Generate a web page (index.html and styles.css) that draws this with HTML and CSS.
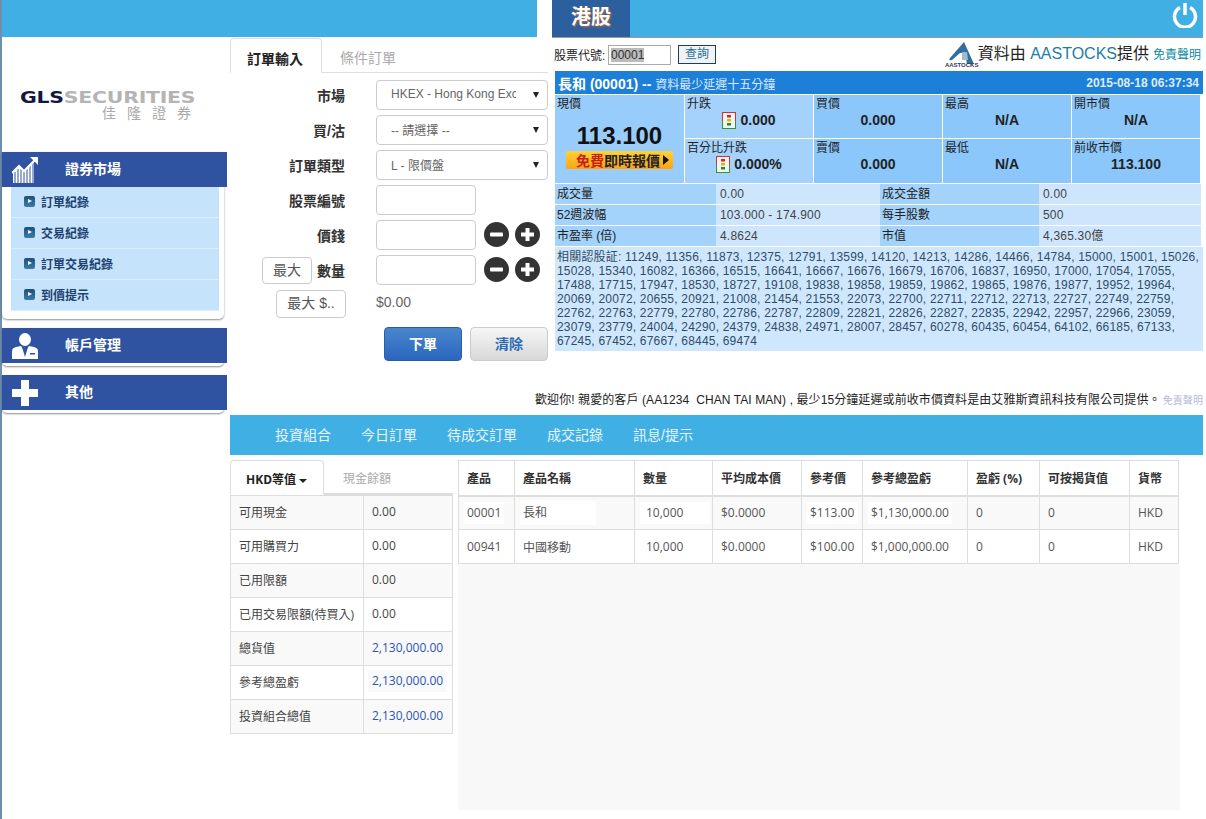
FILE: index.html
```html
<!DOCTYPE html>
<html lang="zh-Hant">
    <head>
        <meta charset="UTF-8">
        <title>GLS Securities</title>
        <link rel="stylesheet" href="styles.css">
    </head>
    <body>
        <div class="page">
            <div class="top">
                <div class="top-left">
                    <div class="top-bar"></div>
                    <div class="top-left-body">
                        <!-- 左側選單 -->
                        <div class="sidebar">
                            <div class="logo">
                                <div class="logo-en"><b>GLS</b>SECURITIES</div>
                                <div class="logo-zh">佳隆證券</div>
                            </div>
                            <div class="menu">
                                <div class="menu-head">
                                    <svg class="menu-icon" width="26" height="26" viewBox="0 0 26 26">
                                        <path d="M1 26V15L7 9l5 5 5-5 5-5V26z" fill="#fff"/>
                                        <path d="M3 26V15M6 26V12M9 26V12M12 26V15M15 26V12M18 26V9M21 26V6" stroke="#2f53a0" stroke-width="1"/>
                                        <path d="M0 16l7-7 5 5 11-11" fill="none" stroke="#fff" stroke-width="2"/>
                                        <path d="M18 0h8v8z" fill="#fff"/>
                                    </svg>
                                    <span>證券市場</span>
                                </div>
                                <ul class="menu-list">
                                    <li class="menu-item"><i class="bullet"></i>訂單紀錄</li>
                                    <li class="menu-item"><i class="bullet"></i>交易紀錄</li>
                                    <li class="menu-item"><i class="bullet"></i>訂單交易紀錄</li>
                                    <li class="menu-item"><i class="bullet"></i>到價提示</li>
                                </ul>
                            </div>
                            <div class="menu">
                                <div class="menu-head">
                                    <svg class="menu-icon" width="26" height="26" viewBox="0 0 26 26">
                                        <ellipse cx="13" cy="6.5" rx="6" ry="6.5" fill="#fff"/>
                                        <path d="M0 26V18q0-3 4-4l5-1 4 6 4-6 5 1q4 1 4 4v8z" fill="#fff"/>
                                        <path d="M10 14l3 10 3-10-3 3z" fill="#2f53a0"/>
                                        <rect x="18" y="20" width="5" height="1.5" fill="#2f53a0"/>
                                    </svg>
                                    <span>帳戶管理</span>
                                </div>
                            </div>
                            <div class="menu">
                                <div class="menu-head">
                                    <svg class="menu-icon" width="26" height="26" viewBox="0 0 26 26">
                                        <path d="M9 0h8v9h9v8h-9v9H9v-9H0V9h9z" fill="#fff"/>
                                    </svg>
                                    <span>其他</span>
                                </div>
                            </div>
                        </div>

                        <!-- 訂單輸入 -->
                        <div class="order">
                            <div class="order-tabs">
                                <a class="order-tab active">訂單輸入</a>
                                <a class="order-tab">條件訂單</a>
                            </div>
                            <div class="order-form">
                                <div class="form-row">
                                    <label class="form-label">市場</label>
                                    <div class="field select"><span class="select-text">HKEX - Hong Kong Exc</span><i class="caret"></i></div>
                                </div>
                                <div class="form-row">
                                    <label class="form-label">買/沽</label>
                                    <div class="field select"><span class="select-text">-- 請選擇 --</span><i class="caret"></i></div>
                                </div>
                                <div class="form-row">
                                    <label class="form-label">訂單類型</label>
                                    <div class="field select"><span class="select-text">L - 限價盤</span><i class="caret"></i></div>
                                </div>
                                <div class="form-row">
                                    <label class="form-label">股票編號</label>
                                    <div class="field short"></div>
                                </div>
                                <div class="form-row">
                                    <label class="form-label">價錢</label>
                                    <div class="field short"></div>
                                    <svg class="step" width="25" height="25" viewBox="0 0 25 25"><circle cx="12.5" cy="12.5" r="12.5" fill="#333"/><rect x="6" y="10.5" width="13" height="4" rx="1" fill="#fff"/></svg>
                                    <svg class="step" width="25" height="25" viewBox="0 0 25 25"><circle cx="12.5" cy="12.5" r="12.5" fill="#333"/><path d="M10.5 6h4v4.5H19v4h-4.5V19h-4v-4.5H6v-4h4.5z" fill="#fff"/></svg>
                                </div>
                                <div class="form-row">
                                    <label class="form-label"><a class="small-btn">最大</a>數量</label>
                                    <div class="field short"></div>
                                    <svg class="step" width="25" height="25" viewBox="0 0 25 25"><circle cx="12.5" cy="12.5" r="12.5" fill="#333"/><rect x="6" y="10.5" width="13" height="4" rx="1" fill="#fff"/></svg>
                                    <svg class="step" width="25" height="25" viewBox="0 0 25 25"><circle cx="12.5" cy="12.5" r="12.5" fill="#333"/><path d="M10.5 6h4v4.5H19v4h-4.5V19h-4v-4.5H6v-4h4.5z" fill="#fff"/></svg>
                                </div>
                                <div class="form-row amount-row">
                                    <div class="form-label"><a class="small-btn wide">最大 $..</a></div>
                                    <div class="amount">$0.00</div>
                                </div>
                                <div class="form-actions">
                                    <a class="btn btn-primary">下單</a>
                                    <a class="btn btn-default">清除</a>
                                </div>
                            </div>
                        </div>
                    </div>
                </div>

                <!-- 港股報價 -->
                <div class="quote">
                    <div class="quote-head">
                        <div class="quote-tab">港股</div>
                        <svg class="power" width="26" height="26" viewBox="0 0 26 26"><path d="M8 5.5a10.5 10.5 0 1 0 10 0" fill="none" stroke="#fff" stroke-width="3.5"/><path d="M13 1v12" stroke="#fff" stroke-width="3.5"/></svg>
                    </div>
                    <div class="quote-search">
                        <span class="search-label">股票代號:</span>
                        <span class="search-input"><span class="search-value">00001</span></span>
                        <a class="search-btn">查詢</a>
                        <div class="source">
                            <div class="aa-logo">
                                <svg width="30" height="22" viewBox="0 0 30 22"><path d="M17 0L3 16q-2 3 2 2l8-7h5l2 11h7z" fill="#2d6f9e"/><path d="M15 10h5l1 8h-6z" fill="#9fb9cc"/></svg>
                                <span class="aa-name">AASTOCKS</span>
                            </div>
                            <span class="source-text">資料由 <em>AASTOCKS</em>提供</span>
                            <a class="source-link">免責聲明</a>
                        </div>
                    </div>
                    <div class="quote-title">
                        <span><b>長和 (00001) --</b> <small>資料最少延遲十五分鐘</small></span>
                        <b class="quote-time">2015-08-18 06:37:34</b>
                    </div>
                    <div class="quote-grid">
                        <div class="q-cell q-main">
                            <div class="q-label">現價</div>
                            <div class="q-price">113.100</div>
                            <a class="free-btn"><span>免費</span>即時報價<i class="free-arrow"></i></a>
                        </div>
                        <div class="q-cell q-light">
                            <div class="q-label">升跌</div>
                            <div class="q-value q-change">
                                <svg class="light" width="14" height="17" viewBox="0 0 14 17"><rect x=".5" y=".5" width="13" height="16" fill="#f4f4f4" stroke="#c33"/><path d="M.5 9v7.5h13V9" fill="none" stroke="#2a9a3a"/><rect x="5" y="3" width="4" height="2.5" fill="#d22"/><rect x="5" y="7" width="4" height="2.5" fill="#e8b400"/><rect x="5" y="11" width="4" height="2.5" fill="#1a8f2e"/></svg>
                                0.000
                            </div>
                        </div>
                        <div class="q-cell"><div class="q-label">買價</div><div class="q-value">0.000</div></div>
                        <div class="q-cell"><div class="q-label">最高</div><div class="q-value">N/A</div></div>
                        <div class="q-cell"><div class="q-label">開市價</div><div class="q-value">N/A</div></div>
                        <div class="q-cell q-light">
                            <div class="q-label">百分比升跌</div>
                            <div class="q-value q-change">
                                <svg class="light" width="14" height="17" viewBox="0 0 14 17"><rect x=".5" y=".5" width="13" height="16" fill="#f4f4f4" stroke="#c33"/><path d="M.5 9v7.5h13V9" fill="none" stroke="#2a9a3a"/><rect x="5" y="3" width="4" height="2.5" fill="#d22"/><rect x="5" y="7" width="4" height="2.5" fill="#e8b400"/><rect x="5" y="11" width="4" height="2.5" fill="#1a8f2e"/></svg>
                                0.000%
                            </div>
                        </div>
                        <div class="q-cell"><div class="q-label">賣價</div><div class="q-value">0.000</div></div>
                        <div class="q-cell"><div class="q-label">最低</div><div class="q-value">N/A</div></div>
                        <div class="q-cell"><div class="q-label">前收市價</div><div class="q-value">113.100</div></div>
                    </div>
                    <div class="stats">
                        <div class="s-key">成交量</div><div class="s-val">0.00</div><div class="s-key">成交金額</div><div class="s-val">0.00</div>
                        <div class="s-key">52週波幅</div><div class="s-val">103.000 - 174.900</div><div class="s-key">每手股數</div><div class="s-val">500</div>
                        <div class="s-key">市盈率 (倍)</div><div class="s-val">4.8624</div><div class="s-key">市值</div><div class="s-val">4,365.30億</div>
                    </div>
                    <div class="warrants">相關認股証: 11249, 11356, 11873, 12375, 12791, 13599, 14120, 14213, 14286, 14466, 14784, 15000, 15001, 15026, 15028, 15340, 16082, 16366, 16515, 16641, 16667, 16676, 16679, 16706, 16837, 16950, 17000, 17054, 17055, 17488, 17715, 17947, 18530, 18727, 19108, 19838, 19858, 19859, 19862, 19865, 19876, 19877, 19952, 19964, 20069, 20072, 20655, 20921, 21008, 21454, 21553, 22073, 22700, 22711, 22712, 22713, 22727, 22749, 22759, 22762, 22763, 22779, 22780, 22786, 22787, 22809, 22821, 22826, 22827, 22835, 22942, 22957, 22966, 23059, 23079, 23779, 24004, 24290, 24379, 24838, 24971, 28007, 28457, 60278, 60435, 60454, 64102, 66185, 67133, 67245, 67452, 67667, 68445, 69474</div>
                    <div class="welcome"><span>歡迎你! 親愛的客戶 (AA1234&nbsp; CHAN TAI MAN) , 最少15分鐘延遲或前收市價資料是由艾雅斯資訊科技有限公司提供。</span><a class="welcome-link">免責聲明</a></div>
                </div>
            </div>

            <div class="lower">
                <div class="nav">
                    <a class="nav-item">投資組合</a>
                    <a class="nav-item">今日訂單</a>
                    <a class="nav-item">待成交訂單</a>
                    <a class="nav-item">成交記錄</a>
                    <a class="nav-item">訊息/提示</a>
                </div>
                <div class="lower-body">
                    <div class="cash">
                        <div class="cash-tabs">
                            <a class="cash-tab active">HKD等值<i class="cash-caret"></i></a>
                            <a class="cash-tab">現金餘額</a>
                        </div>
                        <table class="cash-table">
                            <tr><td>可用現金</td><td>0.00</td></tr>
                            <tr><td>可用購買力</td><td>0.00</td></tr>
                            <tr><td>已用限額</td><td>0.00</td></tr>
                            <tr><td>已用交易限額(待買入)</td><td>0.00</td></tr>
                            <tr><td>總貨值</td><td class="num-blue">2,130,000.00</td></tr>
                            <tr><td>參考總盈虧</td><td class="num-blue"><span class="cash-patch">2,130,000.00</span></td></tr>
                            <tr><td>投資組合總值</td><td class="num-blue">2,130,000.00</td></tr>
                        </table>
                    </div>
                    <div class="holdings">
                        <table class="hold-table">
                            <colgroup>
                                <col class="c1"><col class="c2"><col class="c3"><col class="c4"><col class="c5"><col class="c6"><col class="c7"><col class="c8"><col class="c9">
                            </colgroup>
                            <tr>
                                <th>產品</th><th>產品名稱</th><th>數量</th><th>平均成本價</th><th>參考價</th><th>參考總盈虧</th><th>盈虧 (%)</th><th>可按揭貨值</th><th>貨幣</th>
                            </tr>
                            <tr class="odd">
                                <td><span class="patch">00001</span></td><td><span class="patch name-patch">長和</span></td><td class="qty"><span class="patch qty-patch">10,000</span></td><td>$0.0000</td><td><span class="patch">$113.00</span></td><td><span class="patch">$1,130,000.00</span></td><td>0</td><td>0</td><td>HKD</td>
                            </tr>
                            <tr>
                                <td>00941</td><td>中國移動</td><td class="qty">10,000</td><td>$0.0000</td><td>$100.00</td><td>$1,000,000.00</td><td>0</td><td>0</td><td>HKD</td>
                            </tr>
                        </table>
                        <div class="hold-empty"></div>
                    </div>
                </div>
            </div>
        </div>
    </body>
</html>
```

FILE: styles.css
```css
*{
    box-sizing: border-box;
}

html,body{
    margin: 0;
    padding: 0;
    background-color: #fff;
}

body{
    font-family: "Liberation Sans", "Noto Sans CJK TC", sans-serif;
    font-size: 12px;
    color: #333;
}

ul{
    padding: 0;
    margin: 0;
    list-style: none;
}

.page{
    width: 1206px;
    min-height: 819px;
    border-left: 2px solid #6d8fb0;
}

.top{
    display: flex;
    height: 415px;
}

.top-left{
    width: 550px;
    flex: none;
}

.top-bar{
    width: 535px;
    height: 37px;
    background-color: #40b0e4;
}

.top-left-body{
    display: flex;
}

/* 左側選單 */
.sidebar{
    width: 228px;
    flex: none;
}

.logo{
    height: 115px;
    padding: 53px 0 0 18px;
    color: #b4b4b4;
}

.logo-en{
    font-family: "DejaVu Sans", sans-serif;
    font-weight: bold;
    font-size: 16.5px;
    line-height: 16px;
    letter-spacing: -.2px;
    white-space: nowrap;
    transform: scaleX(1.24);
    transform-origin: left center;
}

.logo-en b{
    color: #12183f;
}

.logo-zh{
    padding-left: 82px;
    font-size: 14px;
    line-height: 14px;
    letter-spacing: 11px;
    white-space: nowrap;
    color: #a9a9a9;
}

.menu{
    width: 222px;
    margin-bottom: 9px;
    padding-bottom: 3px;
    background-color: #fff;
    border-radius: 0 0 5px 5px;
    box-shadow: 0 1px 2px rgba(0,0,0,.45);
}

.menu-head{
    display: flex;
    align-items: center;
    width: 225px;
    height: 35px;
    padding-left: 10px;
    background-color: #2f53a0;
    color: #fff;
    font-size: 14px;
    font-weight: bold;
}

.menu-head span{
    margin: 0 0 3px 27px;
}

.menu-list{
    margin: 0 5px 0 9px;
    padding-bottom: 5px;
}

.menu-item{
    display: flex;
    align-items: center;
    height: 31px;
    padding: 0 0 2px 13px;
    background-color: #c5e4fb;
    border-bottom: 1px solid #dcefff;
    color: #20406f;
    font-size: 12px;
    font-weight: bold;
}

.bullet{
    position: relative;
    width: 11px;
    height: 11px;
    margin-right: 6px;
    border-radius: 2px;
    background: linear-gradient(#1f4f7e, #3a7da8);
}

.bullet::after{
    content: '';
    position: absolute;
    top: 3px;
    left: 4px;
    border-left: 4px solid #fff;
    border-top: 2.5px solid transparent;
    border-bottom: 2.5px solid transparent;
}

/* 訂單輸入 */
.order{
    width: 318px;
    flex: none;
}

.order-tabs{
    display: flex;
    height: 35px;
    border-bottom: 1px solid #ddd;
    margin-top: 1px;
}

.order-tab{
    padding: 12px 18px 0 18px;
    margin-bottom: -1px;
    font-size: 14px;
    line-height: 17px;
    color: #aaa;
}

.order-tab.active{
    width: 92px;
    padding-left: 16px;
    background-color: #fff;
    border: 1px solid #ddd;
    border-bottom-color: #fff;
    border-radius: 4px 4px 0 0;
    color: #222;
    font-weight: bold;
}

.order-form{
    padding-top: 7px;
}

.form-row{
    display: flex;
    align-items: center;
    height: 30px;
    margin-bottom: 5px;
}

.form-label{
    display: flex;
    align-items: center;
    justify-content: flex-end;
    width: 146px;
    padding-right: 31px;
    font-size: 14px;
    font-weight: bold;
    color: #333;
}

.field{
    height: 30px;
    background-color: #fff;
    border: 1px solid #ccc;
    border-radius: 4px;
    color: #666;
    font-size: 12px;
}

.select{
    display: flex;
    align-items: center;
    justify-content: space-between;
    width: 172px;
    padding: 0 8px 2px 14px;
}

.select-text{
    width: 125px;
    overflow: hidden;
    white-space: nowrap;
}

.caret{
    margin-top: 2px;
    border-top: 6px solid #222;
    border-left: 3px solid transparent;
    border-right: 3px solid transparent;
}

.short{
    width: 100px;
}

.step{
    margin: 0 0 2px 8px;
}

.step + .step{
    margin-left: 6px;
}

.small-btn{
    display: block;
    width: 50px;
    height: 27px;
    margin-right: 5px;
    border: 1px solid #ccc;
    border-radius: 4px;
    color: #555;
    font-weight: normal;
    line-height: 25px;
    text-align: center;
}

.small-btn.wide{
    width: 70px;
    height: 28px;
    margin: 0 -1px 0 0;
    font-size: 14px;
}

.amount-row{
    height: 28px;
    margin: 2px 0 9px;
}

.amount{
    margin-bottom: 4px;
    color: #666;
    font-size: 14px;
}

.form-actions{
    display: flex;
    gap: 8px;
    margin-left: 154px;
}

.btn{
    width: 78px;
    height: 34px;
    border-radius: 4px;
    font-size: 14px;
    font-weight: bold;
    line-height: 33px;
    text-align: center;
}

.btn-primary{
    background: linear-gradient(#4a86cc, #2a66be);
    border: 1px solid #2a5fa8;
    color: #fff;
}

.btn-default{
    background: linear-gradient(#f6f6f6, #d8d8d8);
    border: 1px solid #ccc;
    color: #2d6cb5;
}

/* 港股報價 */
.quote{
    width: 651px;
    flex: none;
}

.quote-head{
    display: flex;
    justify-content: space-between;
    height: 38px;
    background-color: #40b0e4;
    border-bottom: 1px solid #9a9a9a;
}

.quote-tab{
    width: 78px;
    background-color: #2b5f9e;
    color: #fff;
    font-size: 20px;
    font-weight: bold;
    line-height: 34px;
    text-align: center;
    text-shadow: 1px 1px 2px #c9683a;
}

.power{
    margin: 2px 5px 0 0;
}

.quote-search{
    display: flex;
    align-items: center;
    height: 33px;
    padding-left: 2px;
}

.search-label{
    width: 54px;
    color: #222;
    font-size: 12px;
}

.search-input{
    width: 63px;
    height: 20px;
    padding: 2px;
    border: 1px solid #aaa;
    color: #333;
    font-size: 12px;
    line-height: 14px;
}

.search-value{
    display: inline-block;
    background-color: #bbb;
}

.search-btn{
    width: 38px;
    height: 19px;
    margin-left: 7px;
    border: 1px solid #1d3f5f;
    background-color: #f2f2f2;
    color: #1d6f9f;
    line-height: 17px;
    text-align: center;
}

.source{
    display: flex;
    align-items: center;
    margin-left: auto;
    padding-right: 2px;
}

.aa-logo{
    display: flex;
    flex-direction: column;
    align-items: center;
    width: 32px;
}

.aa-name{
    margin-top: -2px;
    color: #335;
    font-size: 6px;
    font-weight: bold;
    line-height: 6px;
}

.source-text{
    margin-bottom: 6px;
    color: #222;
    font-size: 16px;
}

.source-text em{
    color: #1d7ca8;
    font-style: normal;
}

.source-link{
    margin: 0 0 2px 4px;
    color: #0a8aa8;
    font-size: 12px;
}

.quote-title{
    display: flex;
    justify-content: space-between;
    align-items: center;
    height: 23px;
    margin-left: 3px;
    padding: 0 4px 0 3px;
    background-color: #1e7fd8;
    color: #fff;
    font-size: 14px;
}

.quote-title small{
    font-size: 12px;
    color: #d8ecff;
}

.quote-time{
    font-size: 12px;
    color: #dcecff;
}

.quote-grid{
    display: grid;
    grid-template-columns: 129px 128px 128px 128px 128px;
    grid-template-rows: 43px 44px;
    gap: 1px;
    margin: 1px 0 0 3px;
}

.q-cell{
    padding: 2px 2px 0;
    background-color: #8cc7fb;
    color: #111;
}

.q-light{
    background-color: #a4d2fc;
}

.q-main{
    grid-row: span 2;
    text-align: center;
    background-color: #98ccfb;
}

.q-main .q-label{
    text-align: left;
}

.q-label{
    line-height: 15px;
    color: #222;
}

.q-value{
    margin-top: -2px;
    font-size: 14px;
    font-weight: bold;
    line-height: 20px;
    text-align: center;
    color: #222;
}

.q-change{
    display: flex;
    align-items: center;
    justify-content: center;
    gap: 4px;
}

.q-price{
    margin-top: 10px;
    font-size: 24px;
    font-weight: bold;
    line-height: 28px;
    color: #111;
}

.free-btn{
    display: flex;
    align-items: center;
    width: 107px;
    height: 18px;
    margin: 1px auto 0;
    padding-left: 10px;
    background: linear-gradient(#ffd23a, #ffa30f);
    border-radius: 2px;
    color: #222;
    font-size: 14px;
    font-weight: bold;
}

.free-btn span{
    color: #c81e10;
}

.free-arrow{
    margin-left: 3px;
    border-left: 6px solid #111;
    border-top: 5px solid transparent;
    border-bottom: 5px solid transparent;
}

.stats{
    display: grid;
    grid-template-columns: 161px 164px 159px 162px;
    grid-auto-rows: 20px;
    row-gap: 1px;
    margin: 1px 0 0 3px;
}

.s-key{
    padding-left: 2px;
    background-color: #a3d2fb;
    color: #222;
    line-height: 20px;
}

.s-val{
    padding-left: 4px;
    background-color: #cde6fd;
    color: #444;
    line-height: 20px;
    letter-spacing: .2px;
}

.warrants{
    width: 648px;
    height: 104px;
    margin: 1px 0 0 3px;
    padding: 3px 2px 0 2px;
    background-color: #cfe7fd;
    color: #2f4d68;
    line-height: 14px;
    letter-spacing: .2px;
}

.welcome{
    display: flex;
    justify-content: flex-end;
    margin-top: 41px;
    white-space: nowrap;
    color: #222;
    line-height: 16px;
    letter-spacing: .09px;
}

.welcome-link{
    margin-left: 2px;
    color: #b8b8dc;
    font-size: 10px;
    line-height: 17px;
}

/* 下半部 */
.lower{
    margin-left: 228px;
}

.nav{
    display: flex;
    align-items: center;
    gap: 30px;
    width: 973px;
    height: 40px;
    padding: 0 0 2px 45px;
    background-color: #40b0e4;
}

.nav-item{
    color: #e8f6fd;
    font-size: 14px;
}

.lower-body{
    display: flex;
    padding-top: 5px;
}

.cash{
    width: 223px;
    flex: none;
    font-family: "Open Sans", "Noto Sans CJK TC", sans-serif;
}

.cash-tabs{
    display: flex;
    height: 35px;
    border-bottom: 2px solid #ddd;
}

.cash-tab{
    padding: 10px 0 0 19px;
    color: #aaa;
    font-size: 12px;
    line-height: 17px;
}

.cash-tab.active{
    width: 94px;
    padding: 10px 0 0 15px;
    margin-bottom: -2px;
    background-color: #fff;
    border: 1px solid #ddd;
    border-bottom-color: #fff;
    border-radius: 4px 4px 0 0;
    color: #222;
    font-weight: bold;
}

.cash-caret{
    display: inline-block;
    margin-left: 3px;
    vertical-align: middle;
    border-top: 4px solid #222;
    border-left: 4px solid transparent;
    border-right: 4px solid transparent;
}

.cash-table{
    width: 223px;
    border-collapse: collapse;
    table-layout: fixed;
    color: #444;
}

.cash-table td{
    height: 34px;
    padding: 0 8px 1px;
    border: 1px solid #ddd;
    white-space: nowrap;
}

.cash-table td:first-child{
    width: 133px;
}

.cash-table td:last-child{
    padding-bottom: 3px;
}

.cash-table tr:nth-child(odd) td{
    background-color: #f9f9f9;
}

.cash-table .num-blue{
    color: #2a56b0;
}

.cash-patch{
    display: inline-block;
    margin: 0 -4px;
    padding: 0 4px;
    background-color: #f8f9fb;
    line-height: 22px;
}

.holdings{
    width: 722px;
    margin-left: 5px;
    flex: none;
    font-family: "Open Sans", "Noto Sans CJK TC", sans-serif;
}

.hold-table{
    width: 720px;
    border-collapse: collapse;
    table-layout: fixed;
    color: #555;
}

.hold-table .c1{ width: 56px; }
.hold-table .c2{ width: 120px; }
.hold-table .c3{ width: 78px; }
.hold-table .c4{ width: 89px; }
.hold-table .c5{ width: 61px; }
.hold-table .c6{ width: 105px; }
.hold-table .c7{ width: 72px; }
.hold-table .c8{ width: 90px; }
.hold-table .c9{ width: 49px; }

.hold-table th{
    height: 35px;
    padding: 0 8px;
    border: 1px solid #ddd;
    border-bottom-width: 2px;
    color: #333;
    font-weight: bold;
    text-align: left;
    white-space: nowrap;
}

.hold-table td{
    height: 34px;
    padding: 0 8px;
    border: 1px solid #ddd;
    white-space: nowrap;
}

.hold-table .odd td{
    background-color: #f9f9f9;
}

.hold-table .qty{
    padding-left: 11px;
}

.patch{
    display: inline-block;
    margin: 0 -3px;
    padding: 0 3px;
    background-color: #fff;
    line-height: 22px;
}

.name-patch{
    width: 76px;
    line-height: 24px;
}

.qty-patch{
    width: 70px;
    margin-left: -6px;
    padding-left: 6px;
}

.hold-empty{
    height: 246px;
    background-color: #f8f8f8;
}
```
